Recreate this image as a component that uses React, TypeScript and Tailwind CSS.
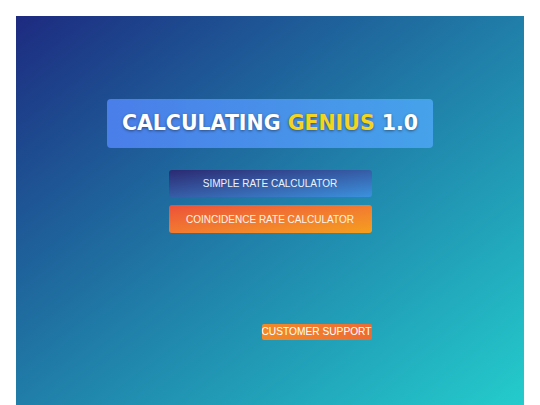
import React from 'react';

const App: React.FC = () => {
  return (
    <div className="h-screen overflow-hidden bg-white pt-4 px-4" style={{ fontFamily: '"Liberation Sans", Arial, sans-serif' }}>
      <div className="h-[389px] bg-gradient-to-br from-[#1d2a80] via-[#207ea8] to-[#24cccc] flex flex-col items-center pt-[83px]">
        {/* Title banner */}
        <div className="w-[326px] h-[49px] rounded-[4px] bg-gradient-to-r from-[#4a7ee9] to-[#46a2ea] flex items-center justify-center">
          <h1
            className="text-[20.5px] font-bold text-white [text-shadow:0_1px_3px_rgba(0,0,0,0.45)]"
            style={{ fontFamily: '"DejaVu Sans", Verdana, sans-serif' }}
          >
            CALCULATING <span className="text-[#f5d41e]">GENIUS</span> 1.0
          </h1>
        </div>

        {/* Calculator buttons */}
        <div className="w-[203px] mt-[22px] flex flex-col gap-[8px]">
          <button className="h-[27px] rounded-[3px] bg-gradient-to-br from-[#2a2a72] to-[#3a92de] text-[#eef1fa] text-[10px] uppercase whitespace-nowrap">
            Simple Rate Calculator
          </button>
          <button className="h-[28px] rounded-[3px] bg-gradient-to-br from-[#ec4f38] to-[#f59f1c] text-[#fff3e8] text-[10px] uppercase whitespace-nowrap">
            Coincidence Rate Calculator
          </button>

          <div className="flex justify-end mt-[83px]">
            <button className="w-[110px] h-[16px] rounded-[2px] bg-gradient-to-r from-[#f28a26] to-[#ee6a33] text-white text-[10.2px] leading-none uppercase whitespace-nowrap flex items-center justify-center">
              Customer Support
            </button>
          </div>
        </div>
      </div>
    </div>
  );
};

export default App;
